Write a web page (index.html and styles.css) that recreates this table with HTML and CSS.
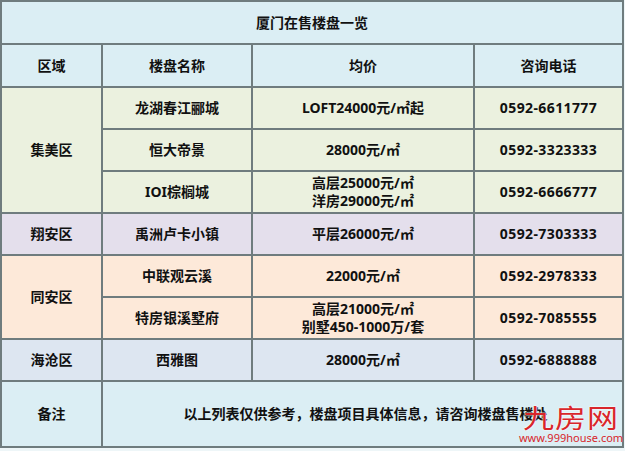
FILE: index.html
```html
<!DOCTYPE html>
<html lang="zh-CN">
<head>
<meta charset="utf-8">
<title>厦门在售楼盘一览</title>
<link rel="stylesheet" href="styles.css">
</head>
<body>
<div class="sheet">
<table class="list">
  <colgroup>
    <col class="c-area"><col class="c-name"><col class="c-price"><col class="c-tel">
  </colgroup>
  <tr class="r-title"><td colspan="4" class="bg-blue">厦门在售楼盘一览</td></tr>
  <tr class="r-head bg-blue"><td>区域</td><td>楼盘名称</td><td>均价</td><td>咨询电话</td></tr>
  <tr class="r bg-green"><td rowspan="3">集美区</td><td>龙湖春江郦城</td><td class="num">LOFT24000元/㎡起</td><td class="tel">0592-6611777</td></tr>
  <tr class="r bg-green"><td>恒大帝景</td><td class="num">28000元/㎡</td><td class="tel">0592-3323333</td></tr>
  <tr class="r bg-green"><td>IOI棕榈城</td><td class="num two">高层25000元/㎡<br>洋房29000元/㎡</td><td class="tel">0592-6666777</td></tr>
  <tr class="r bg-purple"><td>翔安区</td><td>禹洲卢卡小镇</td><td class="num">平层26000元/㎡</td><td class="tel">0592-7303333</td></tr>
  <tr class="r bg-peach"><td rowspan="2">同安区</td><td>中联观云溪</td><td class="num">22000元/㎡</td><td class="tel">0592-2978333</td></tr>
  <tr class="r bg-peach"><td>特房银溪墅府</td><td class="num two">高层21000元/㎡<br>别墅450-1000万/套</td><td class="tel">0592-7085555</td></tr>
  <tr class="r bg-steel"><td>海沧区</td><td>西雅图</td><td class="num">28000元/㎡</td><td class="tel">0592-6888888</td></tr>
  <tr class="r-note bg-blue"><td>备注</td><td colspan="3" class="note-cell"><div class="note"><span class="note-text">以上列表仅供参考，楼盘项目具体信息，请咨询楼盘售楼处</span><div class="logo"><span class="logo-mark">九房网</span><span class="logo-url">www.999house.com</span></div></div></td></tr>
</table>
</div>
</body>
</html>
```

FILE: styles.css
```css
html, body {
  margin: 0;
  padding: 0;
  background: #ffffff;
}
.sheet {
  width: 625px;
  height: 451px;
  background: #eef6f8;
  overflow: hidden;
}
.list {
  border-collapse: collapse;
  width: 622px;
  table-layout: fixed;
  font-family: "Noto Sans", "Noto Sans CJK SC", sans-serif;
  font-weight: 700;
  font-size: 14px;
  color: #111;
}
.c-area { width: 101px; }
.c-name { width: 150px; }
.c-price { width: 222px; }
.c-tel { width: 149px; }
.list td {
  border: 2px solid #6f7c7e;
  text-align: center;
  vertical-align: middle;
  padding: 0;
  line-height: 18px;
}
.r-title { height: 43px; }
.r-head { height: 43px; }
.r { height: 42px; }
.r-note { height: 66px; }
.bg-blue { background: #dbeef4; }
.bg-blue td { background: #dbeef4; }
.bg-green { background: #ebf1df; }
.bg-purple { background: #e4dfec; }
.bg-peach { background: #fde9d9; }
.bg-steel { background: #dde6f1; }
.tel { letter-spacing: 0.4px; }
.note-cell { padding: 0; }
.note {
  position: relative;
  height: 64px;
  display: flex;
  align-items: center;
  justify-content: center;
}
.note-text { padding-left: 6px; }
.logo {
  position: absolute;
  right: 3px;
  top: 21px;
  display: flex;
  flex-direction: column;
  align-items: center;
  width: 96px;
}
.logo-mark {
  font-family: "Noto Sans CJK SC", sans-serif;
  font-weight: 400;
  font-size: 31px;
  line-height: 27px;
  letter-spacing: 1px;
  color: #d8262b;
  transform: scaleY(0.85);
  text-shadow: 0 0 2px #ffffff, 0 0 2px #ffffff;
}
.logo-url {
  font-family: "Noto Sans", sans-serif;
  font-weight: 400;
  font-size: 11px;
  line-height: 12px;
  color: #d8262b;
  margin-top: 2px;
}
```
